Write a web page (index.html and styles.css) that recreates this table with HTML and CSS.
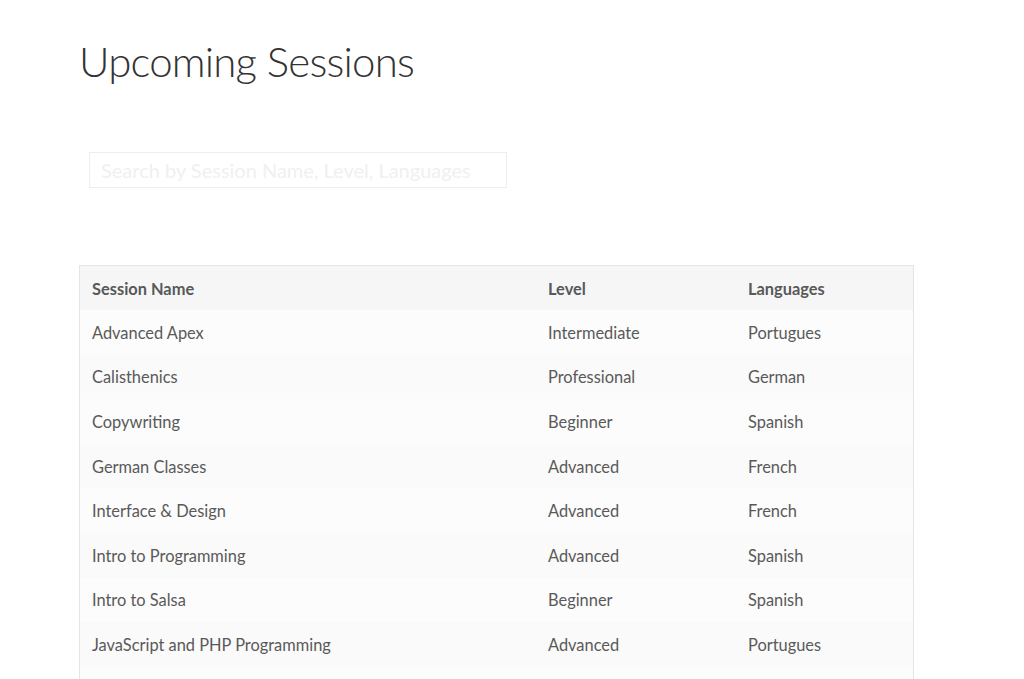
FILE: index.html
```html
<!DOCTYPE html>
<html>
<head>
<meta charset="utf-8">
<link rel="stylesheet" href="styles.css">
</head>
<body>
<div class="page">
  <h1 class="title">Upcoming Sessions</h1>
  <div class="search-wrap">
    <input class="search" type="text" placeholder="Search by Session Name, Level, Languages">
  </div>
  <table class="sessions">
    <thead>
      <tr><th class="c-name">Session Name</th><th class="c-level">Level</th><th class="c-lang">Languages</th></tr>
    </thead>
    <tbody>
      <tr><td>Advanced Apex</td><td>Intermediate</td><td>Portugues</td></tr>
      <tr><td>Calisthenics</td><td>Professional</td><td>German</td></tr>
      <tr><td>Copywriting</td><td>Beginner</td><td>Spanish</td></tr>
      <tr><td>German Classes</td><td>Advanced</td><td>French</td></tr>
      <tr><td>Interface &amp; Design</td><td>Advanced</td><td>French</td></tr>
      <tr><td>Intro to Programming</td><td>Advanced</td><td>Spanish</td></tr>
      <tr><td>Intro to Salsa</td><td>Beginner</td><td>Spanish</td></tr>
      <tr><td>JavaScript and PHP Programming</td><td>Advanced</td><td>Portugues</td></tr>
      <tr class="empty"><td></td><td></td><td></td></tr>
    </tbody>
  </table>
</div>
</body>
</html>
```

FILE: styles.css
```css
html, body {
  margin: 0;
  padding: 0;
  background: #fff;
}
body {
  font-family: "Lato", "Open Sans", sans-serif;
  color: #595959;
  overflow: hidden;
  height: 679px;
}
.page {
  padding: 0 110px 0 79px;
}
.title {
  margin: 0;
  padding-top: 34px;
  font-weight: 300;
  font-size: 42px;
  line-height: 54px;
  color: #333;
  letter-spacing: -0.8px;
}
.search-wrap {
  padding: 64px 0 0 10px;
}
.search {
  display: block;
  box-sizing: border-box;
  width: 418px;
  height: 36px;
  border: 1px solid #eceef2;
  border-radius: 0;
  padding: 0 11px;
  font-family: inherit;
  font-size: 20px;
  color: #333;
  outline: none;
}
.search::placeholder {
  color: #eff0f3;
}
.sessions {
  margin-top: 77px;
  width: 835px;
  border-collapse: collapse;
  border: 1px solid #e3e5e9;
  font-size: 16.4px;
}
.sessions th,
.sessions td {
  text-align: left;
  padding: 0 12px;
  height: 44.6px;
}
.sessions th {
  font-weight: 700;
  background: #f6f6f6;
  height: 44px;
}
.c-name { width: 432px; }
.c-level { width: 176px; }
.sessions tbody tr:nth-child(odd) { background: #fcfcfc; }
.sessions tbody tr:nth-child(even) { background: #fafafa; }
```
